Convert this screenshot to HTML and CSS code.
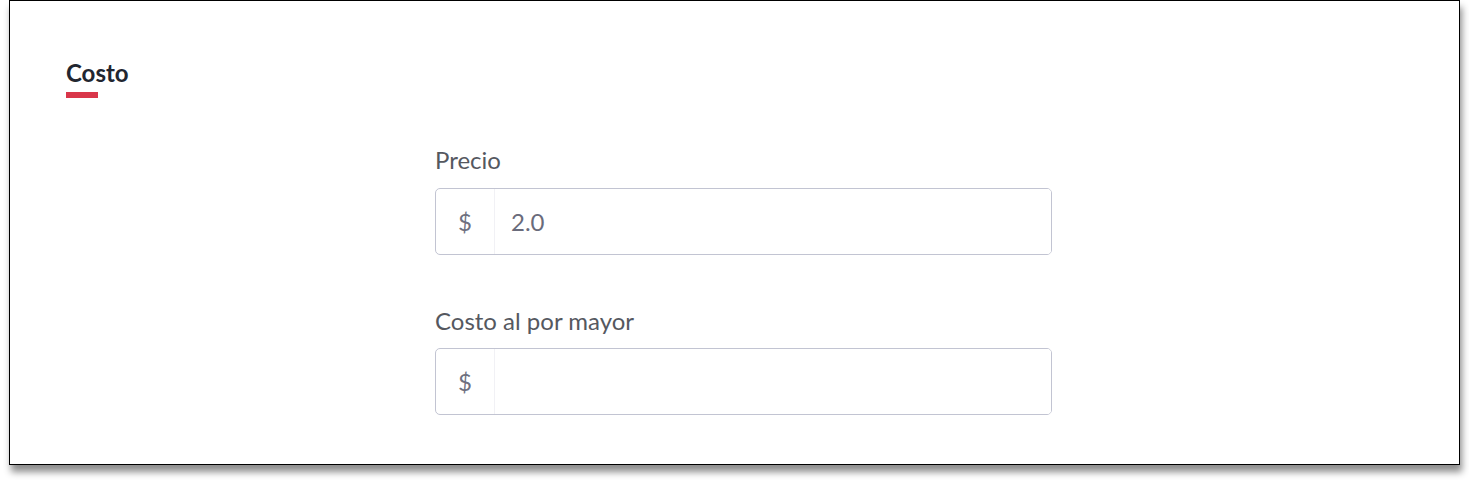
FILE: index.html
```html
<!DOCTYPE html>
<html lang="es">
<head>
  <meta charset="UTF-8">
  <title>Costo</title>
  <link rel="stylesheet" href="styles.css">
</head>
<body>

  <div class="cost-card">
    <h2 class="section-title">Costo</h2>
    <div class="title-bar"></div>

    <form class="cost-form">
      <div class="field">
        <label for="price">Precio</label>
        <div class="input-group">
          <span class="addon">$</span>
          <input type="text" id="price" value="2.0">
        </div>
      </div>

      <div class="field">
        <label for="wholesale">Costo al por mayor</label>
        <div class="input-group">
          <span class="addon">$</span>
          <input type="text" id="wholesale">
        </div>
      </div>
    </form>
  </div>

</body>
</html>
```

FILE: styles.css
```css
* {
  box-sizing: border-box;
}

body {
  margin: 0;
  padding-bottom: 18px;
  font-family: Lato, 'Open Sans', sans-serif;
  background: #ffffff;
}

.cost-card {
  margin: 0 9px;
  width: 1451px;
  height: 465px;
  border: 1px solid #000;
  background: #fff;
  padding: 58px 56px 0;
  box-shadow: 2px 7px 7px rgba(0, 0, 0, 0.45);
}

.section-title {
  margin: 0;
  font-size: 24px;
  line-height: 1.2;
  font-weight: 700;
  color: #222630;
}

.title-bar {
  width: 32px;
  height: 6px;
  margin-top: 4px;
  background: #d9364a;
}

.cost-form {
  width: 617px;
  margin: 48px 0 0 369px;
  display: flex;
  flex-direction: column;
  gap: 52px;
}

.field label {
  display: block;
  font-size: 24px;
  line-height: 1.2;
  color: #55585f;
  margin-bottom: 13px;
}

.input-group {
  display: flex;
  height: 67px;
  border: 1px solid #c2c4d2;
  border-radius: 5px;
  overflow: hidden;
}

.addon {
  width: 59px;
  flex: none;
  display: flex;
  align-items: center;
  justify-content: center;
  font-size: 24px;
  color: #6f7080;
  border-right: 1px solid #f1f1f5;
}

.input-group input {
  flex: 1;
  border: none;
  outline: none;
  padding: 0 16px;
  font-family: inherit;
  font-size: 24px;
  color: #6a6b7b;
  background: #fff;
}
```
